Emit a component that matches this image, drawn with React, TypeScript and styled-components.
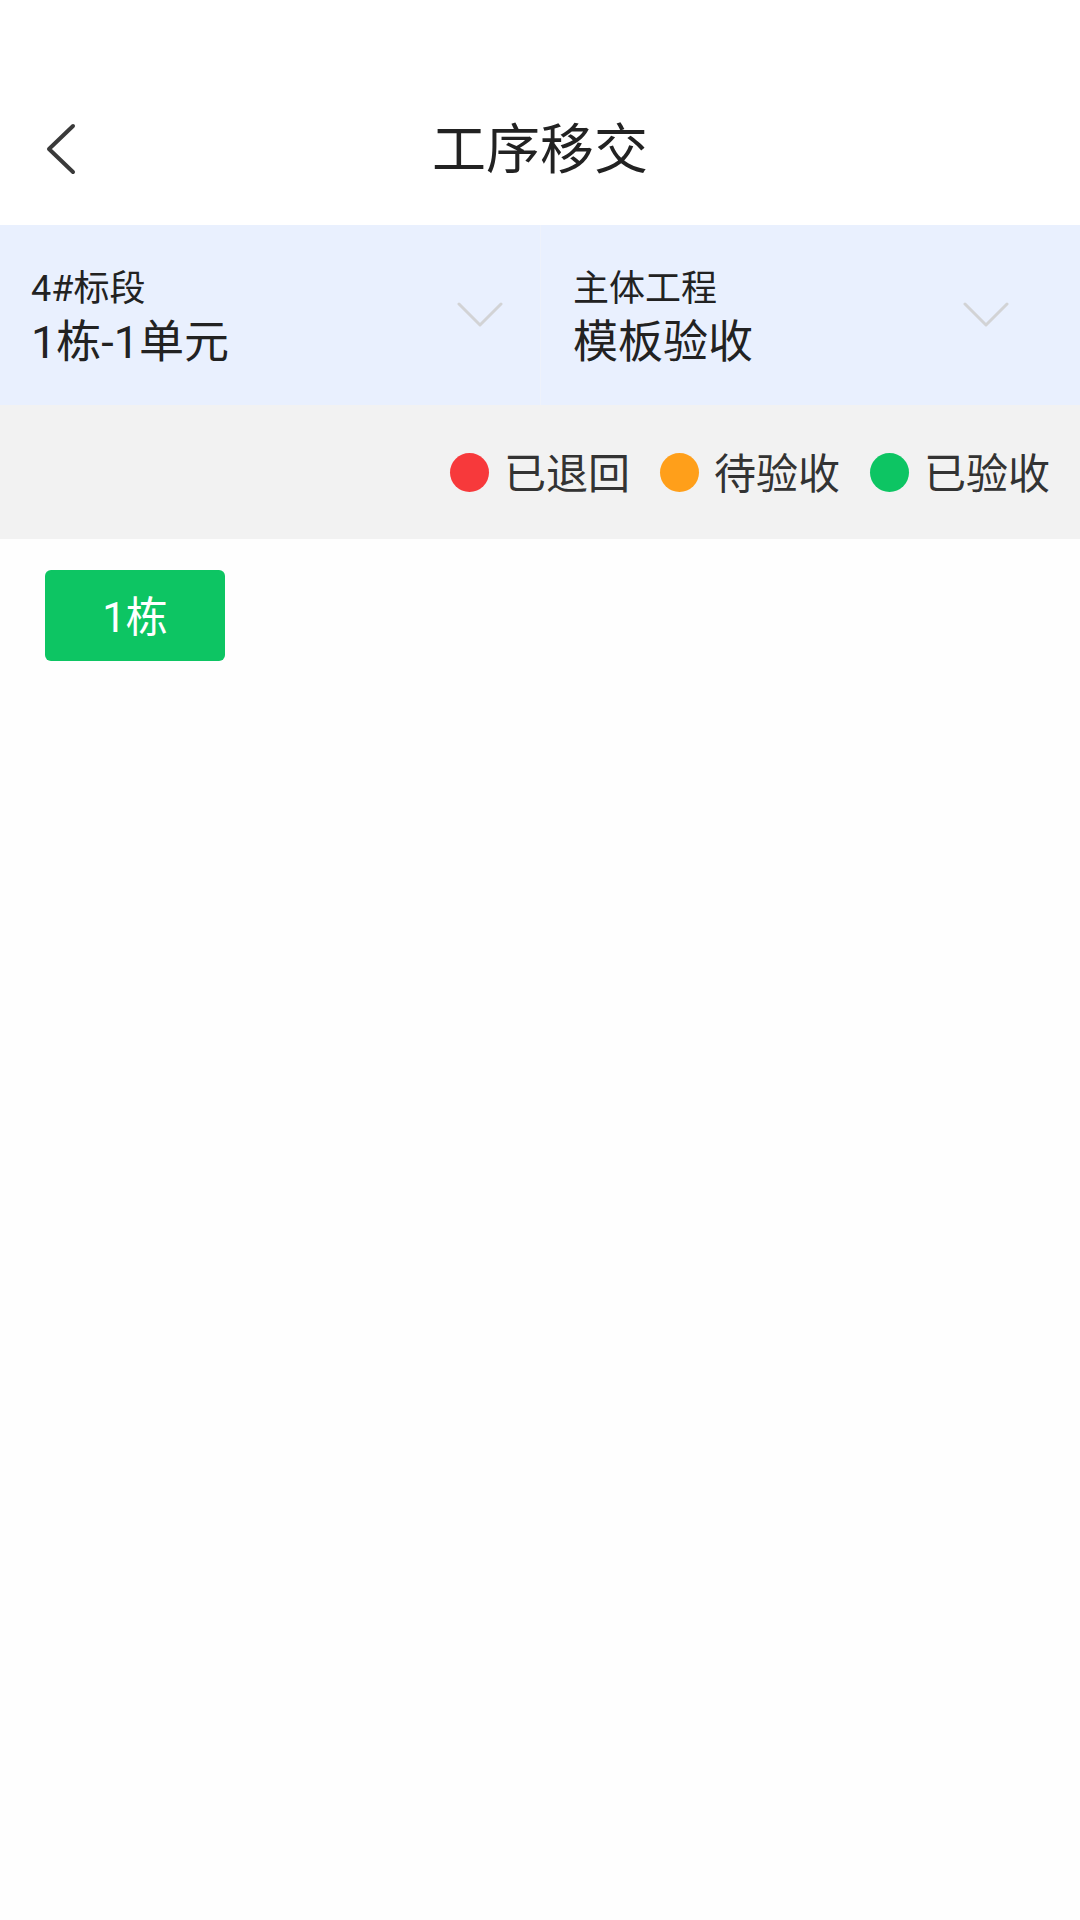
import * as React from 'react'
import styled, { createGlobalStyle } from 'styled-components'

const GlobalStyle = createGlobalStyle`
  html, body {
    margin: 0;
    padding: 0;
    background: #fefefe;
  }
  body {
    font-family: Roboto, "Noto Sans CJK SC", "Noto Sans", sans-serif;
    color: #222222;
  }
  * {
    box-sizing: border-box;
  }
`

interface IFilter {
  label: string
  value: string
  endSpace: number
}

interface IStatus {
  label: string
  color: string
}

const filters: IFilter[] = [
  { label: '4#标段', value: '1栋-1单元', endSpace: 37 },
  { label: '主体工程', value: '模板验收', endSpace: 71 }
]

const statuses: IStatus[] = [
  { label: '已退回', color: '#f7393b' },
  { label: '待验收', color: '#ff9f1a' },
  { label: '已验收', color: '#0dc563' }
]

const Page = styled.div`
  width: 1080px;
  min-height: 1920px;
  background: #fefefe;
`

const StatusBar = styled.div`
  height: 72px;
  background: #ffffff;
`

const NavBar = styled.header`
  height: 153px;
  background: #ffffff;
  display: grid;
  grid-template-columns: 1fr auto 1fr;
  align-items: center;
`

const BackButton = styled.button`
  justify-self: start;
  display: flex;
  align-items: center;
  margin: 0 0 0 45px;
  padding: 0;
  border: none;
  background: transparent;
  cursor: pointer;
`

const Title = styled.h1`
  margin: 0;
  padding-top: 4px;
  font-size: 54px;
  line-height: 64px;
  font-weight: 400;
  color: #222222;
`

const FilterPanel = styled.section`
  display: grid;
  grid-template-columns: 1fr 1fr;
  height: 180px;
  background: #e9f0fe;
`

const FilterCell = styled.div<{ $endSpace: number; $divided: boolean }>`
  display: flex;
  align-items: center;
  min-width: 0;
  padding-left: ${({ $divided }) => ($divided ? 32 : 31)}px;
  padding-right: ${({ $endSpace }) => $endSpace}px;
  border-left: ${({ $divided }) => ($divided ? '1px solid #eef2fb' : 'none')};
`

const FilterText = styled.div`
  flex: 1;
  display: flex;
  flex-direction: column;
  padding-top: 7px;
`

const FilterLabel = styled.span`
  font-size: 36px;
  line-height: 48px;
  color: #222222;
`

const FilterValue = styled.span`
  font-size: 45px;
  line-height: 60px;
  color: #222222;
`

const Legend = styled.div`
  height: 134px;
  background: #f2f2f2;
  display: flex;
  justify-content: flex-end;
  align-items: center;
  gap: 30px;
  padding-right: 30px;
`

const LegendItem = styled.div`
  display: flex;
  align-items: center;
`

const Dot = styled.span<{ $color: string }>`
  width: 39px;
  height: 39px;
  border-radius: 50%;
  background: ${({ $color }) => $color};
  margin-right: 15px;
`

const LegendLabel = styled.span`
  padding-top: 6px;
  font-size: 42px;
  line-height: 56px;
  color: #333333;
`

const Content = styled.main`
  display: flex;
  flex-wrap: wrap;
  gap: 30px;
  padding: 31px 45px;
`

const BuildingTag = styled.button`
  width: 180px;
  height: 91px;
  border: none;
  border-radius: 6px;
  background: #0dc563;
  color: #ffffff;
  font-family: inherit;
  font-size: 42px;
  line-height: 1;
  padding: 5px 0 0;
  cursor: pointer;
`

function BackIcon() {
  return (
    <svg width="32" height="52" viewBox="0 0 32 52" fill="none">
      <path
        d="M28 3 L4 26 L28 49"
        stroke="#3a3a3a"
        strokeWidth="4"
        strokeLinecap="round"
        strokeLinejoin="round"
      />
    </svg>
  )
}

function ChevronDown() {
  return (
    <svg width="46" height="26" viewBox="0 0 46 26" fill="none">
      <path
        d="M2 2 L23 23 L44 2"
        stroke="#d2d3d5"
        strokeWidth="3"
        strokeLinecap="round"
        strokeLinejoin="round"
      />
    </svg>
  )
}

export default function App() {
  return (
    <Page>
      <GlobalStyle />
      <StatusBar />
      <NavBar>
        <BackButton aria-label="返回">
          <BackIcon />
        </BackButton>
        <Title>工序移交</Title>
        <span />
      </NavBar>
      <FilterPanel>
        {filters.map((f, i) => (
          <FilterCell key={i} $endSpace={f.endSpace} $divided={i > 0}>
            <FilterText>
              <FilterLabel>{f.label}</FilterLabel>
              <FilterValue>{f.value}</FilterValue>
            </FilterText>
            <ChevronDown />
          </FilterCell>
        ))}
      </FilterPanel>
      <Legend>
        {statuses.map((s, i) => (
          <LegendItem key={i}>
            <Dot $color={s.color} />
            <LegendLabel>{s.label}</LegendLabel>
          </LegendItem>
        ))}
      </Legend>
      <Content>
        <BuildingTag>1栋</BuildingTag>
      </Content>
    </Page>
  )
}
